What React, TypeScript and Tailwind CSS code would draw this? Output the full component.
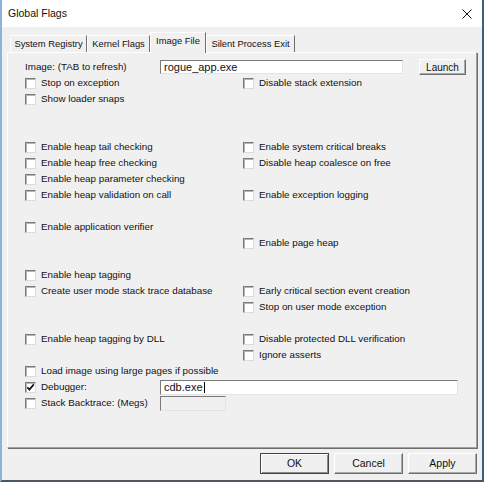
import React from "react";

const FONT = "font-['Liberation_Sans',Arial,sans-serif]";

function Check({ checked }: { checked?: boolean }) {
  return (
    <span className="relative flex h-[11px] w-[11px] shrink-0 items-center justify-center border border-t-[#7a7a7a] border-l-[#7a7a7a] border-b-[#dcdcdc] border-r-[#dcdcdc] bg-white shadow-[inset_1px_1px_0_#b4b4b4]">
      {checked && (
        <svg width="9" height="9" viewBox="0 0 9 9" fill="none">
          <path d="M1.3 4.2 L3.4 6.6 L7.8 1.4" stroke="#111" strokeWidth="1.7" />
        </svg>
      )}
    </span>
  );
}

function Item({ label, checked }: { label: string; checked?: boolean }) {
  return (
    <div className="flex h-4 items-center gap-[5px]">
      <Check checked={checked} />
      <span className="whitespace-nowrap text-[9.8px] text-[#111]">{label}</span>
    </div>
  );
}

/** left / right flag pairs, one per 16px row; null leaves the cell empty */
const ROWS: [string | null, string | null][] = [
  ["Stop on exception", "Disable stack extension"],
  ["Show loader snaps", null],
  [null, null],
  [null, null],
  ["Enable heap tail checking", "Enable system critical breaks"],
  ["Enable heap free checking", "Disable heap coalesce on free"],
  ["Enable heap parameter checking", null],
  ["Enable heap validation on call", "Enable exception logging"],
  [null, null],
  ["Enable application verifier", null],
  [null, "Enable page heap"],
  [null, null],
  ["Enable heap tagging", null],
  ["Create user mode stack trace database", "Early critical section event creation"],
  [null, "Stop on user mode exception"],
  [null, null],
  ["Enable heap tagging by DLL", "Disable protected DLL verification"],
  [null, "Ignore asserts"],
  ["Load image using large pages if possible", null],
];

const TABS = [
  { name: "System Registry", w: "w-[77px]" },
  { name: "Kernel Flags", w: "w-[63px]" },
  { name: "Image File", w: "w-[56px]", active: true },
  { name: "Silent Process Exit", w: "w-[89px]" },
];

function Button({ children, primary }: { children: React.ReactNode; primary?: boolean }) {
  return (
    <button
      className={`flex h-[21px] w-[69px] items-center justify-center bg-[#f0f0f0] text-[10.5px] text-[#111] ${
        primary
          ? "border border-[#444] shadow-[inset_1px_1px_0_#fff,inset_-1px_-1px_0_#8a8a8a]"
          : "border border-t-white border-l-white border-b-[#6e6e6e] border-r-[#6e6e6e] shadow-[inset_-1px_-1px_0_#a8a8a8]"
      }`}
    >
      {children}
    </button>
  );
}

export default function App() {
  return (
    <div className={`h-[484px] w-[487px] bg-white ${FONT}`}>
      <div className="flex h-[482px] w-[484px] flex-col border-b-2 border-l-2 border-r-2 border-b-[#4f5660] border-l-[#8db3d6] border-r-[#3f5f7f] bg-[#f0f0f0]">
        {/* title bar */}
        <div className="flex h-[27px] shrink-0 items-center justify-between bg-white pl-[6px] pr-[10px]">
          <span className="text-[10.5px] text-[#111]">Global Flags</span>
          <svg width="10" height="10" viewBox="0 0 10 10">
            <path d="M0.5 0.5 L9.5 9.5 M9.5 0.5 L0.5 9.5" stroke="#111" strokeWidth="1" />
          </svg>
        </div>

        {/* tabs */}
        <div className="flex h-[25px] shrink-0 items-end pl-[8px]">
          {TABS.map((t) =>
            t.active ? (
              <div
                key={t.name}
                className={`relative z-10 -mb-px flex h-[21px] ${t.w} items-center justify-center border-l border-t border-r border-l-white border-t-white border-r-[#6e6e6e] bg-[#f0f0f0] pb-[3px] text-[9.4px] text-[#111]`}
              >
                {t.name}
              </div>
            ) : (
              <div
                key={t.name}
                className={`flex h-[17px] ${t.w} items-center justify-center border-l border-t border-r border-l-white border-t-white border-r-[#6e6e6e] bg-[#f0f0f0] text-[9.4px] text-[#111]`}
              >
                {t.name}
              </div>
            )
          )}
        </div>

        {/* tab page */}
        <div className="ml-[5px] h-[396px] w-[470px] shrink-0 border border-t-white border-l-white border-b-[#a0a0a0] border-r-[#a0a0a0] pl-[17px] pt-[6px] shadow-[1px_1px_0_#6e6e6e]">
          <div className="flex h-4 items-center">
            <span className="w-[135px] text-[9.8px] text-[#111]">Image: (TAB to refresh)</span>
            <div className="flex h-[14px] w-[243px] items-center border border-t-[#7a7a7a] border-l-[#7a7a7a] border-b-[#e3e3e3] border-r-[#e3e3e3] bg-white pl-[3px] text-[11px] text-[#111]">
              rogue_app.exe
            </div>
            <button className="ml-[16px] flex h-4 w-[47px] items-center justify-center border border-t-white border-l-white border-b-[#6e6e6e] border-r-[#6e6e6e] bg-[#f0f0f0] text-[10px] text-[#111] shadow-[inset_-1px_-1px_0_#a8a8a8]">
              Launch
            </button>
          </div>

          <div className="grid grid-cols-[218px_1fr]">
            {ROWS.map(([l, r], i) => (
              <React.Fragment key={i}>
                <div className="h-4">{l && <Item label={l} />}</div>
                <div className="h-4">{r && <Item label={r} />}</div>
              </React.Fragment>
            ))}
          </div>

          <div className="flex h-4 items-center">
            <div className="w-[135px]">
              <Item label="Debugger:" checked />
            </div>
            <div className="flex h-[15px] w-[298px] items-center border border-t-[#7a7a7a] border-l-[#7a7a7a] border-b-[#e3e3e3] border-r-[#e3e3e3] bg-white pl-[3px] text-[11px] text-[#111]">
              cdb.exe
              <span className="ml-px h-[11px] w-px bg-black" />
            </div>
          </div>
          <div className="flex h-4 items-center">
            <div className="w-[135px]">
              <Item label="Stack Backtrace: (Megs)" />
            </div>
            <div className="h-[15px] w-[66px] border border-t-[#7a7a7a] border-l-[#7a7a7a] border-b-[#e3e3e3] border-r-[#e3e3e3] bg-[#f0f0f0]" />
          </div>
        </div>

        {/* dialog buttons */}
        <div className="mt-[5px] flex justify-end gap-[5px] pr-[5px]">
          <Button primary>OK</Button>
          <Button>Cancel</Button>
          <Button>Apply</Button>
        </div>
      </div>
    </div>
  );
}
